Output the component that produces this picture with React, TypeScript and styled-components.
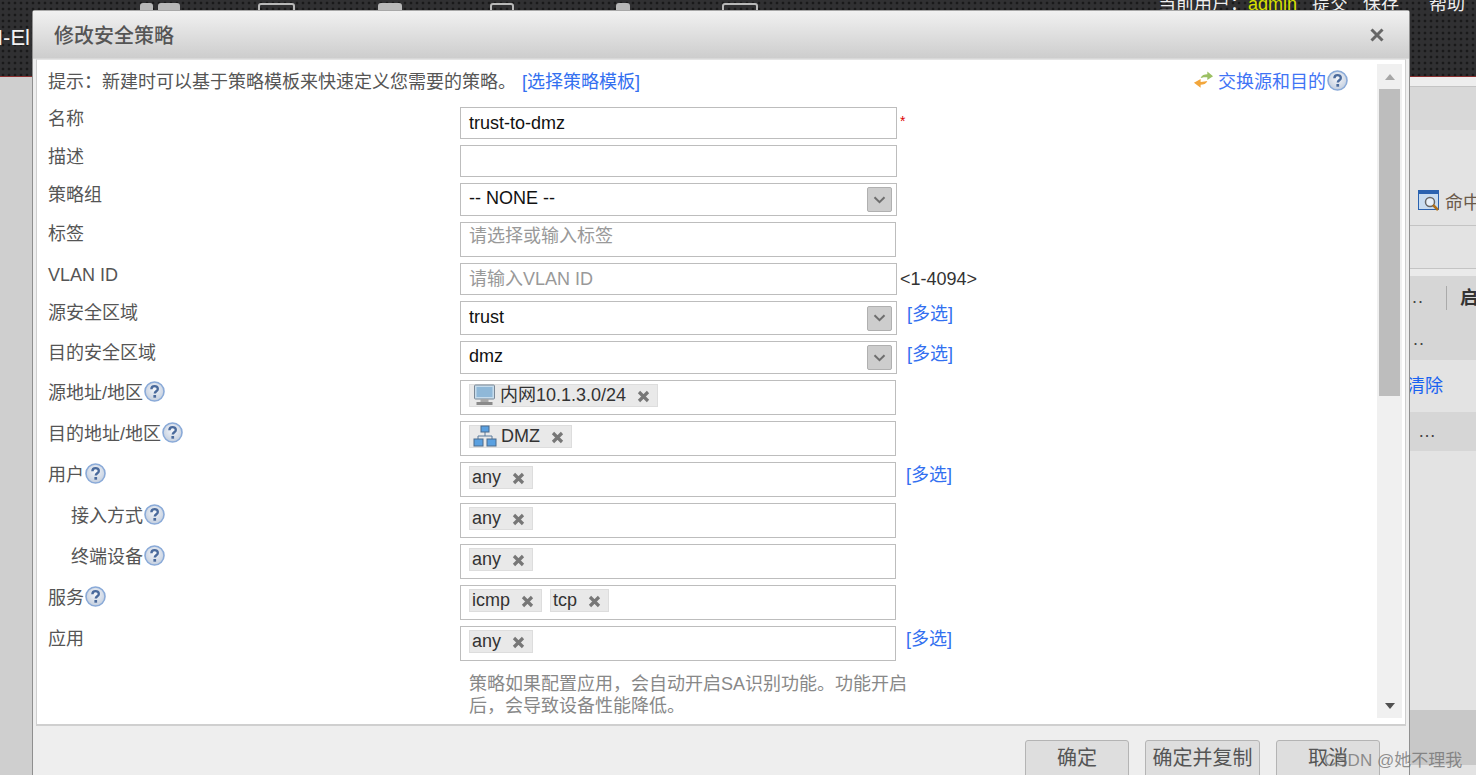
import React from 'react'
import styled, { createGlobalStyle } from 'styled-components'

const GlobalStyle = createGlobalStyle`
  html, body {
    margin: 0;
    padding: 0;
    height: 100%;
    overflow: hidden;
    font-family: "Liberation Sans", "Noto Sans CJK SC", sans-serif;
  }
`

const Page = styled.div`
  position: relative;
  width: 1476px;
  height: 775px;
  overflow: hidden;
  display: flex;
  flex-direction: column;
  background: #cfcfcf;
`

const TopBar = styled.div`
  position: relative;
  height: 76px;
  flex: none;
  border-bottom: 1px solid #8a3030;
  background-color: #303032;
  background-image: radial-gradient(circle at 3px 3px, #19191a 1.2px, transparent 1.7px);
  background-size: 6px 6px;
  display: flex;
  justify-content: flex-end;
  overflow: hidden;
`

const ProductName = styled.div`
  position: absolute;
  left: -3px;
  top: 25px;
  color: #f2f2f2;
  font-size: 22px;
  white-space: nowrap;
`

const TopMenu = styled.div`
  display: flex;
  gap: 15px;
  margin-top: -6px;
  padding-right: 11px;
  height: 24px;
  color: #eee;
  font-size: 18px;
  line-height: 20px;
`

const HelpMenuItem = styled.span`
  margin-left: 15px;
`

const UserName = styled.span`
  color: #d8e000;
`

const NavIcon = styled.div<{ $x: number; $w: number; $solid?: boolean }>`
  position: absolute;
  top: 3px;
  left: ${({ $x }) => $x}px;
  width: ${({ $w }) => $w}px;
  height: 20px;
  border: 2px solid #b8b8b8;
  border-radius: 3px;
  box-sizing: border-box;
  background: ${({ $solid }) => ($solid ? '#b8b8b8' : 'transparent')};
`

const SidePanel = styled.div`
  flex: 1;
  margin-left: 1410px;
  display: flex;
  flex-direction: column;
  background: #e3e3e3;
`

const Band = styled.div<{ $h: number; $bg: string; $line?: boolean }>`
  position: relative;
  height: ${({ $h }) => $h}px;
  flex: none;
  background: ${({ $bg }) => $bg};
  border-bottom: ${({ $line }) => ($line ? '1px solid #c4c4c4' : 'none')};
  box-sizing: border-box;
  display: flex;
  align-items: center;
  font-size: 18px;
  color: #444;
  white-space: nowrap;
  overflow: hidden;
`

const HitTool = styled.div`
  display: flex;
  align-items: center;
  flex: none;
  margin: 46px 0 0 8px;
`

const HitText = styled.span`
  color: #6a5a4a;
  margin-left: 5px;
`

const ClearLink = styled.span`
  color: #1a62f0;
  margin: -4px 0 0 -3px;
  flex: none;
`

const Dots = styled.span<{ $left: number }>`
  margin-left: ${({ $left }) => $left}px;
  letter-spacing: 1px;
  flex: none;
`

const HeadDivider = styled.span`
  width: 1px;
  height: 24px;
  flex: none;
  background: #aaa;
  margin: 0 13px 0 22px;
`

const HeadTitle = styled.span`
  font-weight: 700;
  color: #333;
  flex: none;
  margin-top: -4px;
`

const Modal = styled.div`
  position: absolute;
  left: 32px;
  top: 10px;
  width: 1378px;
  height: 790px;
  box-sizing: border-box;
  border: 1px solid #8f8f8f;
  border-top-color: #a8a8a8;
  border-radius: 3px 3px 0 0;
  background: #eeeeee;
  display: flex;
  flex-direction: column;
`

const TitleBar = styled.div`
  height: 47px;
  flex: none;
  display: flex;
  align-items: center;
  justify-content: space-between;
  padding: 0 25px 0 21px;
  background: linear-gradient(#f1f1f1, #cdcdcd);
  border-bottom: 1px solid #d8d8d8;
`

const Title = styled.div`
  font-size: 20px;
  color: #555;
  font-weight: 500;
`

const ModalBody = styled.div`
  height: 667px;
  flex: none;
  margin: 0 3px 0 3px;
  box-sizing: border-box;
  border: 1px solid #cfcfcf;
  border-top: 1px solid #e4e4e4;
  border-bottom: 2px solid #cfcfcf;
  background: #fff;
  display: flex;
  overflow: hidden;
`

const Form = styled.div`
  flex: 1;
  min-width: 0;
  padding-left: 11px;
  padding-right: 29px;
  color: #555;
`

const HintRow = styled.div`
  height: 47px;
  display: flex;
  justify-content: space-between;
  align-items: center;
  padding-bottom: 7px;
  box-sizing: border-box;
  font-size: 18px;
`

const HintText = styled.div`
  color: #555;
  white-space: nowrap;
  display: flex;
  gap: 6px;
`

const Link = styled.span`
  color: #3370f0;
  white-space: nowrap;
`

const SwapLink = styled.div`
  display: flex;
  align-items: center;
  color: #3f74f5;
  font-size: 18px;
`

const Row = styled.div<{ $h: number }>`
  display: flex;
  align-items: flex-start;
  height: ${({ $h }) => $h}px;
  margin-bottom: 6px;
`

const Label = styled.div<{ $indent?: boolean; $top?: number }>`
  width: 412px;
  flex: none;
  box-sizing: border-box;
  padding-left: ${({ $indent }) => ($indent ? '23px' : '0')};
  margin-top: ${({ $top }) => $top ?? 0}px;
  display: flex;
  align-items: center;
  height: 20px;
  font-size: 18px;
  color: #555;
`

const Field = styled.div<{ $wide?: boolean }>`
  width: ${({ $wide }) => ($wide ? 437 : 436)}px;
  height: 100%;
  flex: none;
  box-sizing: border-box;
  border: 1px solid #bdbdbd;
  background: #fff;
  display: flex;
  align-items: flex-start;
  gap: 8px;
  padding: 3px 8px 0;
  font-size: 18px;
  color: #111;
  line-height: 24px;
`

const SelectField = styled(Field)`
  align-items: center;
  justify-content: space-between;
  padding: 0 4px 0 8px;
`

const SelectValue = styled.span`
  margin-top: -3px;
`

const Placeholder = styled.span<{ $raised?: boolean }>`
  color: #999;
  font-size: 18px;
  margin-top: ${({ $raised }) => ($raised ? '-2px' : '0')};
`

const SelectButton = styled.div`
  width: 25px;
  height: 25px;
  box-sizing: border-box;
  background: #cdcdcd;
  border: 1px solid #b0b0b0;
  border-radius: 2px;
  display: flex;
  align-items: center;
  justify-content: center;
`

const Tag = styled.div`
  height: 23px;
  box-sizing: border-box;
  display: flex;
  align-items: center;
  padding: 0 7px 1px 2px;
  background: #e9e9e9;
  border: 1px solid #ddd;
  color: #333;
  font-size: 18px;
  white-space: nowrap;
`

const Remove = styled.span`
  margin: 2px 0 0 11px;
  display: flex;
`

const RangeHint = styled.span`
  margin: 4px 0 0 3px;
  font-size: 18px;
  line-height: 24px;
  color: #333;
`

const Required = styled.span`
  margin: 2px 0 0 3px;
  font-size: 14px;
  line-height: 24px;
  color: #d00;
`

const MultiLink = styled(Link)`
  margin: 1px 0 0 10px;
  font-size: 18px;
  line-height: 24px;
`

const Note = styled.div`
  margin: 12px 0 0 421px;
  width: 440px;
  font-size: 18px;
  line-height: 22px;
  color: #888;
`

const ScrollTrack = styled.div`
  width: 25px;
  flex: none;
  margin: 4px 3px 6px 0;
  background: #f0f0f0;
  display: flex;
  flex-direction: column;
  align-items: center;
`

const ScrollArrow = styled.div<{ $down?: boolean }>`
  height: 25px;
  flex: none;
  display: flex;
  align-items: center;
  justify-content: center;
  margin-top: ${({ $down }) => ($down ? 'auto' : '0')};
  &::after {
    content: '';
    border-left: 5px solid transparent;
    border-right: 5px solid transparent;
    ${({ $down }) =>
      $down ? 'border-top: 6px solid #505050;' : 'border-bottom: 6px solid #a6a6a6;'}
  }
`

const ScrollThumb = styled.div`
  width: 21px;
  height: 307px;
  flex: none;
  background: #bdbdbd;
`

const Footer = styled.div`
  flex: 1;
  display: flex;
  justify-content: flex-end;
  align-items: flex-start;
  gap: 16px;
  padding: 14px 29px 0 0;
`

const Button = styled.button<{ $w: number }>`
  width: ${({ $w }) => $w}px;
  height: 50px;
  padding: 0 0 18px;
  box-sizing: border-box;
  border: 1px solid #b4b4b4;
  border-radius: 3px;
  background: #dedede;
  color: #555;
  font-family: inherit;
  font-size: 20px;
`

const Watermark = styled.div`
  position: absolute;
  left: 1324px;
  top: 746px;
  font-size: 17px;
  color: rgba(110, 110, 110, 0.75);
  white-space: nowrap;
`

const HelpSvg = styled.svg`
  flex: none;
  margin-left: 1px;
`

const SwapSvg = styled.svg`
  flex: none;
  margin-right: 4px;
`

const TagIconSvg = styled.svg`
  flex: none;
  margin-right: 3px;
`

const Help = () => (
  <HelpSvg width="21" height="21" viewBox="0 0 21 21">
    <defs>
      <radialGradient id="helpFill" cx="50%" cy="40%" r="60%">
        <stop offset="0%" stopColor="#f4f6fa" />
        <stop offset="100%" stopColor="#c3cede" />
      </radialGradient>
    </defs>
    <circle cx="10.5" cy="10.5" r="9.5" fill="url(#helpFill)" stroke="#8aaad8" strokeWidth="1.6" />
    <path d="M7.4 8.2c0-4 6.4-4 6.4-.3 0 2.500-3 2.300-3 4.700" fill="none" stroke="#4a6a9c" strokeWidth="2.400" />
    <rect x="9.400" y="14" width="2.700" height="2.700" fill="#4a6a9c" />
  </HelpSvg>
)

const RemoveIcon = () => (
  <Remove>
    <svg width="13" height="13" viewBox="0 0 13 13">
      <path d="M2 2l9 9M11 2l-9 9" stroke="#777" strokeWidth="3.200" />
    </svg>
  </Remove>
)

const Chevron = () => (
  <svg width="13" height="8" viewBox="0 0 13 8">
    <path d="M1.500 1.200l5 5 5-5" fill="none" stroke="#6e6e6e" strokeWidth="2" />
  </svg>
)

const SwapIcon = () => (
  <SwapSvg width="21" height="20" viewBox="0 0 22 20">
    <path d="M8 8c1-3 4-4 7-4V1l6 5-6 4V7c-3 0-5 0-7 1z" fill="#9cc063" />
    <path d="M15 11c-1 3-4 4-7 4v3l-7-5 7-4v3c3 0 5-1 7-1z" fill="#f2a63c" />
  </SwapSvg>
)

const MonitorIcon = () => (
  <TagIconSvg width="25" height="22" viewBox="0 0 24 22">
    <rect x="2" y="1" width="20" height="14" rx="1" fill="#c6dcec" stroke="#7a8896" />
    <rect x="4" y="3" width="16" height="10" fill="#8fb8d8" />
    <rect x="8" y="15" width="8" height="3" fill="#a8a8a8" />
    <rect x="4" y="18" width="16" height="3" fill="#8a8a8a" />
  </TagIconSvg>
)

const NetworkIcon = () => (
  <TagIconSvg width="26" height="22" viewBox="0 0 24 22">
    <path d="M12 7v4M5 15v-4h14v4" fill="none" stroke="#5a7a9c" />
    <rect x="8" y="1" width="8" height="6" fill="#5aa0e0" stroke="#4a6a8c" />
    <rect x="1" y="14" width="9" height="7" fill="#5aa0e0" stroke="#4a6a8c" />
    <rect x="14" y="14" width="9" height="7" fill="#5aa0e0" stroke="#4a6a8c" />
  </TagIconSvg>
)

const SearchWindowIcon = () => (
  <svg width="22" height="22" viewBox="0 0 22 22">
    <rect x="0.500" y="0.500" width="20" height="19" fill="#c8dcf0" stroke="#2a62b0" />
    <rect x="1" y="1" width="19" height="3" fill="#2a62b0" />
    <circle cx="12" cy="12" r="4.500" fill="#e8f0f8" stroke="#666" strokeWidth="1.500" />
    <path d="M15 15l5 5" stroke="#b0701a" strokeWidth="2.500" />
  </svg>
)

type RowData = {
  label: string
  help?: boolean
  indent?: boolean
  multi?: boolean
  tags: { text: string; icon?: React.ReactNode }[]
}

const tagRows: RowData[] = [
  { label: '源地址/地区', help: true, tags: [{ text: '内网10.1.3.0/24', icon: <MonitorIcon /> }] },
  { label: '目的地址/地区', help: true, tags: [{ text: 'DMZ', icon: <NetworkIcon /> }] },
  { label: '用户', help: true, multi: true, tags: [{ text: 'any' }] },
  { label: '接入方式', help: true, indent: true, tags: [{ text: 'any' }] },
  { label: '终端设备', help: true, indent: true, tags: [{ text: 'any' }] },
  { label: '服务', help: true, tags: [{ text: 'icmp' }, { text: 'tcp' }] },
  { label: '应用', multi: true, tags: [{ text: 'any' }] },
]

function SelectRow({ label, value, height, multi }: { label: string; value: string; height: number; multi?: boolean }) {
  return (
    <Row $h={height}>
      <Label>{label}</Label>
      <SelectField $wide>
        <SelectValue>{value}</SelectValue>
        <SelectButton>
          <Chevron />
        </SelectButton>
      </SelectField>
      {multi && <MultiLink>[多选]</MultiLink>}
    </Row>
  )
}

export default function App() {
  return (
    <>
      <GlobalStyle />
      <Page>
        <TopBar>
          <ProductName>I-El</ProductName>
          <NavIcon $x={140} $w={13} $solid />
          <NavIcon $x={158} $w={22} $solid />
          <NavIcon $x={258} $w={37} />
          <NavIcon $x={378} $w={24} $solid />
          <NavIcon $x={490} $w={24} />
          <NavIcon $x={616} $w={14} $solid />
          <NavIcon $x={722} $w={36} />
          <TopMenu>
            <span>
              {'当前用户\uFF1A'}
              <UserName>admin</UserName>
            </span>
            <span>提交</span>
            <span>保存</span>
            <HelpMenuItem>帮助</HelpMenuItem>
          </TopMenu>
        </TopBar>
        <SidePanel>
          <Band $h={10} $bg="#eeeeee" $line />
          <Band $h={43} $bg="#d8d8d8" />
          <Band $h={96} $bg="#e3e3e3" $line>
            <HitTool>
              <SearchWindowIcon />
              <HitText>命中</HitText>
            </HitTool>
          </Band>
          <Band $h={43} $bg="#e3e3e3" $line />
          <Band $h={7} $bg="#eaeaea" />
          <Band $h={43} $bg="#d6d6d6">
            <Dots $left={2}>..</Dots>
            <HeadDivider />
            <HeadTitle>启用</HeadTitle>
          </Band>
          <Band $h={41} $bg="#d6d6d6">
            <Dots $left={3}>..</Dots>
          </Band>
          <Band $h={52} $bg="#e3e3e3">
            <ClearLink>清除</ClearLink>
          </Band>
          <Band $h={39} $bg="#d6d6d6">
            <Dots $left={8}>…</Dots>
          </Band>
          <Band $h={259} $bg="#e3e3e3" />
          <Band $h={55} $bg="#c8c8c8" />
          <Band $h={10} $bg="#e3e3e3" />
        </SidePanel>

        <Modal>
          <TitleBar>
            <Title>修改安全策略</Title>
            <svg width="14" height="14" viewBox="0 0 14 14">
              <path d="M1.500 1.500l11 11M12.500 1.500l-11 11" stroke="#666" strokeWidth="3" />
            </svg>
          </TitleBar>
          <ModalBody>
            <Form>
              <HintRow>
                <HintText>
                  <span>{'提示\uFF1A新建时可以基于策略模板来快速定义您需要的策略。'}</span>
                  <Link>[选择策略模板]</Link>
                </HintText>
                <SwapLink>
                  <SwapIcon />
                  交换源和目的
                  <Help />
                </SwapLink>
              </HintRow>
              <Row $h={32}>
                <Label>名称</Label>
                <Field $wide>trust-to-dmz</Field>
                <Required>*</Required>
              </Row>
              <Row $h={32}>
                <Label>描述</Label>
                <Field $wide />
              </Row>
              <SelectRow label="策略组" value="-- NONE --" height={33} />
              <Row $h={35}>
                <Label>标签</Label>
                <Field>
                  <Placeholder $raised>请选择或输入标签</Placeholder>
                </Field>
              </Row>
              <Row $h={32}>
                <Label $top={2}>VLAN ID</Label>
                <Field $wide>
                  <Placeholder>请输入VLAN ID</Placeholder>
                </Field>
                <RangeHint>{'<1-4094>'}</RangeHint>
              </Row>
              <SelectRow label="源安全区域" value="trust" height={34} multi />
              <SelectRow label="目的安全区域" value="dmz" height={33} multi />
              {tagRows.map(row => (
                <Row $h={35} key={row.label}>
                  <Label $indent={row.indent} $top={1}>
                    {row.label}
                    {row.help && <Help />}
                  </Label>
                  <Field>
                    {row.tags.map(tag => (
                      <Tag key={tag.text}>
                        {tag.icon}
                        {tag.text}
                        <RemoveIcon />
                      </Tag>
                    ))}
                  </Field>
                  {row.multi && <MultiLink>[多选]</MultiLink>}
                </Row>
              ))}
              <Note>{'策略如果配置应用\uFF0C会自动开启SA识别功能。功能开启后\uFF0C会导致设备性能降低。'}</Note>
            </Form>
            <ScrollTrack>
              <ScrollArrow />
              <ScrollThumb />
              <ScrollArrow $down />
            </ScrollTrack>
          </ModalBody>
          <Footer>
            <Button $w={104}>确定</Button>
            <Button $w={115}>确定并复制</Button>
            <Button $w={104}>取消</Button>
          </Footer>
        </Modal>
        <Watermark>CSDN @她不理我</Watermark>
      </Page>
    </>
  )
}
